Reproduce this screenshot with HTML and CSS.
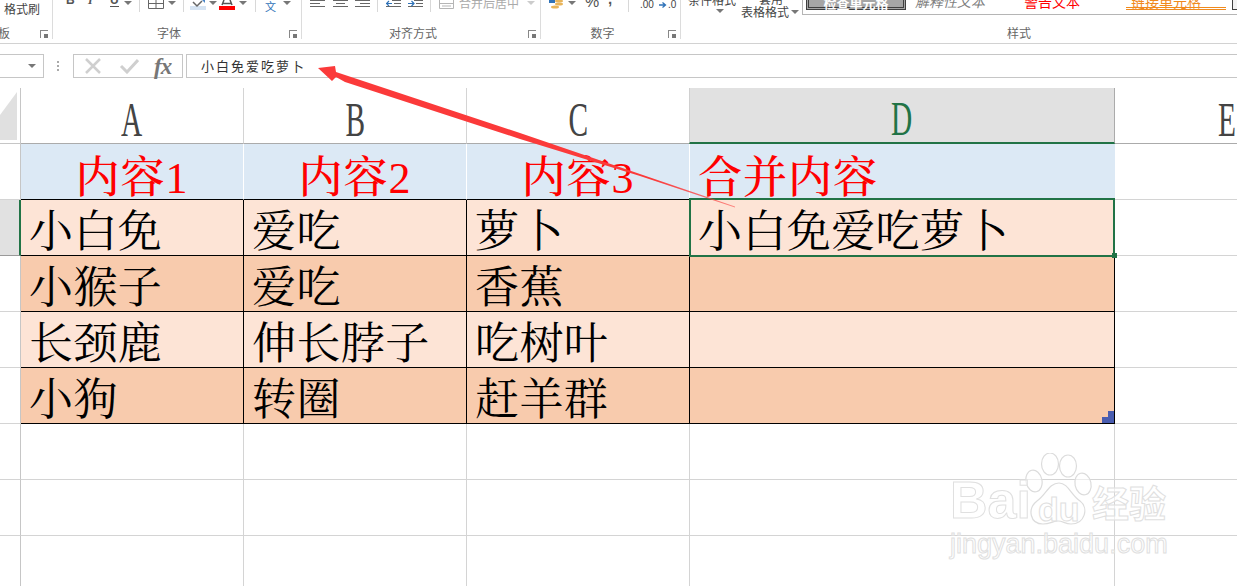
FILE: index.html
```html
<!DOCTYPE html>
<html lang="zh-CN">
<head>
<meta charset="utf-8">
<title>Excel</title>
<link rel="stylesheet" href="styles.css">
</head>
<body>
<div class="app">
  <header class="ribbon">
    <section class="group g-clip">
      <div class="tools"><span class="t t-brush">格式刷</span></div>
      <div class="foot"><span class="label label-left">板</span><i class="launch"></i></div>
    </section>
    <section class="group g-font">
      <div class="tools">
        <span class="t t-b">B</span><span class="t t-i">I</span><span class="t t-u">U</span>
        <i class="caret c-u"></i><i class="sep s-1"></i>
        <svg class="ic" width="20" height="30" viewBox="0 0 20 30"><path d="M2.500 0V8.500H17.500V0M10 0V8.500M2.500 3.500H17.500" fill="none" stroke="#666"/></svg>
        <i class="caret c-b"></i><i class="sep s-2"></i>
        <svg class="ic ic-fill" width="16" height="30" viewBox="0 0 16 30"><rect y="6" width="16" height="4" fill="#d5e3f2"/><path d="M3 2L7 6L12 1" fill="none" stroke="#666" stroke-width="1.500"/><path d="M12 0H15V3Z" fill="#4a86c8"/></svg>
        <i class="caret c-f"></i>
        <svg class="ic ic-a" width="16" height="30" viewBox="0 0 16 30"><path d="M3 5L5 0M13 5L11 0M4 3.500H12" fill="none" stroke="#555" stroke-width="1.500"/><rect y="6" width="16" height="4" fill="#f00"/></svg>
        <i class="caret c-a"></i><i class="sep s-3"></i>
        <span class="t t-wen">文</span>
        <i class="caret c-w"></i>
      </div>
      <div class="foot"><span class="label">字体</span><i class="launch"></i></div>
    </section>
    <section class="group g-align">
      <div class="tools">
        <svg class="ic ic-al1" width="16" height="30" viewBox="0 0 16 30"><path d="M0 .500H15M0 3.500H10M0 6.500H15" stroke="#666"/></svg>
        <svg class="ic ic-al2" width="15" height="30" viewBox="0 0 15 30"><path d="M0 .500H15M3 3.500H12M0 6.500H15" stroke="#666"/></svg>
        <svg class="ic ic-al2" width="15" height="30" viewBox="0 0 15 30"><path d="M0 .500H15M5 3.500H15M0 6.500H15" stroke="#666"/></svg>
        <i class="sep s-4"></i>
        <svg class="ic ic-in1" width="15" height="30" viewBox="0 0 15 30"><path d="M6 .500H15M8 3.500H15M0 6.500H15" stroke="#666"/><path d="M0 3.500H6M3 1L.500 3.500L3 6" fill="none" stroke="#2f72b8" stroke-width="1.200"/></svg>
        <svg class="ic ic-in2" width="15" height="30" viewBox="0 0 15 30"><path d="M6 .500H15M8 3.500H15M0 6.500H15" stroke="#666"/><path d="M0 3.500H6M3.500 1L6 3.500L3.500 6" fill="none" stroke="#2f72b8" stroke-width="1.200"/></svg>
        <i class="sep s-5"></i>
        <svg class="ic ic-mg" width="15" height="30" viewBox="0 0 15 30"><path d="M.500 0V8.500H14.500V0M.500 3.500H14.500M3 6H12" fill="none" stroke="#b5b5b5"/></svg>
        <span class="t t-merge">合并后居中</span>
        <i class="caret c-m"></i>
      </div>
      <div class="foot"><span class="label">对齐方式</span><i class="launch"></i></div>
    </section>
    <section class="group g-num">
      <div class="tools">
        <svg class="ic ic-cur" width="15" height="30" viewBox="0 0 15 30"><path d="M0 0H6V3H0Z" fill="#2f72b8"/><ellipse cx="10" cy="1" rx="4" ry="1.500" fill="#e8b45a"/><ellipse cx="10" cy="4" rx="4" ry="1.500" fill="#e8b45a"/><ellipse cx="6" cy="7" rx="4" ry="1.500" fill="#e8b45a"/></svg>
        <i class="caret c-n"></i>
        <span class="t t-pct">%</span>
        <span class="t t-comma">,</span>
        <i class="sep s-6"></i>
        <span class="t t-dec1">.00</span>
        <svg class="ic ic-arr" width="8" height="30" viewBox="0 0 8 30"><path d="M0 5H6M3.500 2.500L6.500 5L3.500 7.500" fill="none" stroke="#2f72b8" stroke-width="1.300"/></svg>
        <span class="t t-dec2">.0</span>
      </div>
      <div class="foot"><span class="label">数字</span><i class="launch"></i></div>
    </section>
    <section class="group g-style">
      <div class="tools">
        <div class="stack s-cond"><span class="st">条件格式</span><i class="caret c-low"></i></div>
        <div class="stack s-tbl"><span class="st st-c">套用</span><span class="st st-row">表格格式<i class="caret c-in"></i></span></div>
        <div class="gallery">
          <span class="sty sty-check">检查单元格</span>
          <span class="sty sty-exp">解释性文本</span>
          <span class="sty sty-warn">警告文本</span>
          <span class="sty sty-link">链接单元格</span>
          <span class="sty sty-out"></span>
        </div>
      </div>
      <div class="foot"><span class="label">样式</span></div>
    </section>
  </header>

  <div class="formula">
    <div class="namebox"><i class="caret c-name"></i></div>
    <div class="dots"><i></i><i></i><i></i></div>
    <div class="fxbox">
      <svg class="fx-x" width="18" height="16" viewBox="0 0 18 16"><path d="M2 1L16 15M16 1L2 15" stroke="#cfcfcf" stroke-width="2.500"/></svg>
      <svg class="fx-c" width="20" height="16" viewBox="0 0 20 16"><path d="M2 8L8 14L19 2" fill="none" stroke="#cfcfcf" stroke-width="3"/></svg>
      <span class="fx-t">fx</span>
    </div>
    <div class="input">小白免爱吃萝卜</div>
  </div>

  <main class="sheet">
    <div class="grid">
      <div class="corner"><i class="tri"></i></div>
      <div class="ch"><span>A</span></div><div class="ch"><span>B</span></div><div class="ch"><span>C</span></div><div class="ch ch-on"><span>D</span></div><div class="ch ch-e"><span>E</span></div>

      <div class="rh"></div>
      <div class="c hd">内容<b>1</b></div><div class="c hd">内容<b>2</b></div><div class="c hd">内容<b>3</b></div><div class="c hd hd-last">合并内容</div><div class="e"></div>

      <div class="rh rh-on"></div>
      <div class="c lt">小白免</div><div class="c lt">爱吃</div><div class="c lt">萝卜</div><div class="c lt sel">小白免爱吃萝卜</div><div class="e"></div>

      <div class="rh"></div>
      <div class="c dk">小猴子</div><div class="c dk">爱吃</div><div class="c dk">香蕉</div><div class="c dk"></div><div class="e"></div>

      <div class="rh"></div>
      <div class="c lt">长颈鹿</div><div class="c lt">伸长脖子</div><div class="c lt">吃树叶</div><div class="c lt"></div><div class="e"></div>

      <div class="rh"></div>
      <div class="c dk">小狗</div><div class="c dk">转圈</div><div class="c dk">赶羊群</div><div class="c dk resize"></div><div class="e"></div>

      <div class="rh"></div><div class="b"></div><div class="b"></div><div class="b"></div><div class="b"></div><div class="e"></div>
      <div class="rh"></div><div class="b"></div><div class="b"></div><div class="b"></div><div class="b"></div><div class="e"></div>
      <div class="rh"></div><div class="b"></div><div class="b"></div><div class="b"></div><div class="b"></div><div class="e"></div>
    </div>
  </main>

  <svg class="arrow" width="1237" height="586" viewBox="0 0 1237 586">
    <defs><linearGradient id="tail" gradientUnits="userSpaceOnUse" x1="318" y1="68" x2="735" y2="207"><stop offset=".8" stop-color="#fb3a3a"/><stop offset="1" stop-color="#fb3a3a" stop-opacity=".55"/></linearGradient></defs>
    <path d="M318 68L335 66L336 72L520 133L735 206.500L735 207.500L640 176L520 139L345 82L336 77L332 81Z" fill="url(#tail)"/>
  </svg>

  <div class="mark">
    <svg class="paw" width="68" height="74" viewBox="0 0 68 74">
      <g fill="rgba(255,255,255,.55)" stroke="#dcdcdc" stroke-width="1.200">
        <ellipse cx="9" cy="28" rx="8" ry="11" transform="rotate(-12 9 28)"/>
        <ellipse cx="25" cy="11" rx="8.500" ry="11"/>
        <ellipse cx="43" cy="13" rx="8.500" ry="11"/>
        <ellipse cx="58" cy="31" rx="8" ry="11" transform="rotate(-12 58 31)"/>
        <path d="M34 30C43 30 46 42 55 48C64 55 60 71 46 71C40 71 38 68 33 68C28 68 25 71 18 71C5 71 2 56 12 48C21 42 24 30 34 30Z"/>
      </g>
    </svg>
    <span class="m-bai">Bai</span><span class="m-du">du</span><span class="m-cn">经验</span>
    <span class="m-url">jingyan.baidu.com</span>
  </div>
</div>
</body>
</html>
```
FILE: styles.css
```css
* { box-sizing: border-box; margin: 0; padding: 0; }
html, body { width: 1237px; height: 586px; overflow: hidden; background: #fff; }
body { font-family: "Noto Sans CJK SC", "Liberation Sans", sans-serif; color: #444; }
i { display: block; font-style: normal; }
.app { position: relative; width: 1237px; height: 586px; overflow: hidden; display: flex; flex-direction: column; }

/* ribbon */
.ribbon { display: flex; flex: none; height: 44px; border-bottom: 1px solid #d2d2d2; overflow: hidden; }
.group { flex: none; height: 39px; display: flex; flex-direction: column; border-right: 1px solid #dcdcdc; }
.g-clip { width: 53px; }
.g-font { width: 249px; }
.g-align { width: 239px; }
.g-num { width: 140px; }
.g-style { width: 676px; border-right: 0; }
.tools { height: 27px; flex: none; display: flex; align-items: flex-start; }
.foot { height: 12px; flex: none; display: flex; align-items: center; }
.label { flex: 1; text-align: center; font-size: 12px; line-height: 12px; color: #666; }
.label-left { text-align: left; margin-left: -2px; }
.launch { width: 16px; height: 10px; flex: none; position: relative; }
.launch::before { content: ""; position: absolute; left: 4px; top: 2px; width: 7px; height: 7px; border-left: 1px solid #888; border-top: 1px solid #888; }
.launch::after { content: ""; position: absolute; left: 8px; top: 6px; width: 4px; height: 4px; background: #777; }
.ic { flex: none; display: block; }
.t { flex: none; display: block; }
.caret { flex: none; width: 0; height: 0; border-left: 4px solid transparent; border-right: 4px solid transparent; border-top: 4px solid #777; margin-top: 1px; }
.sep { flex: none; width: 1px; height: 12px; background: #d8d8d8; }

.t-brush { margin: 2px 0 0 4px; font-size: 12px; line-height: 14px; color: #444; }
.t-b { margin: -6px 0 0 13px; font: bold 12px/12px "Liberation Sans", sans-serif; color: #555; width: 9px; }
.t-i { margin: -6px 0 0 13px; font: italic bold 12px/12px "Liberation Serif", serif; color: #555; width: 5px; }
.t-u { margin: -6px 0 0 17px; font: bold 12px/12px "Liberation Sans", sans-serif; color: #555; width: 9px; border-bottom: 1px solid #555; height: 13px; }
.c-u { margin-left: 5px; }
.s-1 { margin-left: 7px; }
.g-font .ic:first-of-type { margin-left: 6px; }
.c-b { margin-left: 2px; }
.s-2 { margin-left: 7px; }
.ic-fill { margin-left: 6px; }
.c-f { margin-left: 3px; }
.ic-a { margin-left: 2px; }
.c-a { margin-left: 4px; }
.s-3 { margin-left: 8px; }
.t-wen { margin: 1px 0 0 9px; width: 13px; font-size: 11px; line-height: 11px; color: #2f72b8; }
.c-w { margin-left: 5px; }

.ic-al1 { margin-left: 8px; }
.ic-al2 { margin-left: 7px; }
.s-4 { margin-left: 7px; }
.ic-in1 { margin-left: 8px; }
.ic-in2 { margin-left: 7px; }
.s-5 { margin-left: 7px; }
.ic-mg { margin-left: 8px; }
.t-merge { margin: -4px 0 0 5px; width: 60px; font-size: 12px; line-height: 14px; color: #aaa; }
.c-m { margin-left: 8px; border-top-color: #ccc; }

.ic-cur { margin-left: 8px; }
.c-n { margin-left: 4px; }
.t-pct { margin: -6px 0 0 9px; width: 13px; font: 16px/16px "Liberation Sans", sans-serif; color: #555; }
.t-comma { margin: -9px 0 0 10px; width: 5px; font: bold 15px/15px "Liberation Sans", sans-serif; color: #555; }
.s-6 { margin-left: 15px; }
.t-dec1 { margin: 0 0 0 11px; width: 11px; font: 10px/10px "Liberation Sans", sans-serif; color: #444; }
.ic-arr { margin-left: 8px; }
.t-dec2 { margin: 0 0 0 1px; width: 8px; font: 10px/10px "Liberation Sans", sans-serif; color: #444; }

.stack { flex: none; position: relative; }
.st { display: block; font-size: 12px; line-height: 14px; color: #444; white-space: nowrap; }
.s-cond { width: 53px; margin-left: 7px; margin-top: -7px; }
.s-cond .c-low { margin: 2px 0 0 28px; }
.s-tbl { width: 61px; margin-top: -7px; }
.st-c { padding-left: 18px; height: 12px; line-height: 12px; }
.st-row { display: flex; align-items: center; height: 14px; margin-top: 0; }
.c-in { margin: 0 0 0 2px; }
.gallery { flex: none; width: 436px; height: 15px; display: flex; align-items: flex-start; border-left: 1px solid #b5b5b5; border-bottom: 1px solid #b5b5b5; }
.sty { display: block; flex: none; height: 10px; white-space: nowrap; font-size: 13px; line-height: 8px; }
.sty-check { width: 100px; margin-left: 3px; background: #a5a5a5; color: #fff; font-weight: 700; border: 3px double #3f3f3f; border-top: 0; font-size: 13px; text-align: center; line-height: 6px; }
.sty-exp { width: 76px; margin-left: 9px; color: #7f7f7f; font-style: italic; font-size: 14px; line-height: 2px; }
.sty-warn { width: 60px; margin-left: 33px; color: #f00; font-size: 14px; line-height: 2px; }
.sty-link { width: 100px; margin-left: 42px; padding-left: 5px; color: #f08a1d; font-size: 14px; line-height: 2px; border-bottom: 3px double #f08a1d; }
.sty-out { width: 20px; margin-left: 6px; background: #f2f2f2; border: 1px solid #3f3f3f; border-top: 0; }

/* formula bar */
.formula { flex: none; height: 44px; padding-top: 10px; display: flex; align-items: flex-start; }
.namebox { flex: none; width: 44px; height: 24px; border: 1px solid #c6c6c6; border-left: 0; position: relative; }
.c-name { position: absolute; left: 28px; top: 9px; margin: 0; }
.dots { flex: none; width: 29px; height: 24px; display: flex; flex-direction: column; align-items: center; justify-content: center; gap: 2px; padding-right: 1px; }
.dots i { width: 2px; height: 2px; background: #aaa; }
.fxbox { flex: none; width: 110px; height: 24px; border: 1px solid #c6c6c6; display: flex; align-items: center; padding-left: 10px; }
.fx-c { margin-left: 17px; }
.fx-t { margin-left: 15px; font: italic bold 23px/21px "Liberation Serif", serif; color: #777; letter-spacing: -1px; }
.input { flex: none; width: 1060px; height: 24px; margin-left: 3px; border: 1px solid #c6c6c6; border-right: 0; padding-left: 14px; font-size: 13px; line-height: 21px; letter-spacing: 2px; color: #333; }

/* sheet */
.sheet { flex: 1; min-height: 0; overflow: hidden; }
.grid { display: grid; grid-template-columns: 21px 223px 223px 223px 425px 223px; grid-auto-rows: 56px; }
.corner { border-right: 1px solid #c6c6c6; border-bottom: 1px solid #c6c6c6; padding: 4px 0 0 0; }
.tri { width: 17px; height: 48px; background: #e0e0e0; clip-path: polygon(100% 0, 100% 100%, 0 100%, 0 48%); }
.ch { border-right: 1px solid #d4d4d4; border-bottom: 1px solid #ababab; display: flex; align-items: center; justify-content: center; font: 49px/49px "Liberation Serif", serif; color: #444; overflow: hidden; padding-top: 7px; }
.ch span { display: block; transform: scaleX(.6); }
.ch-on { background: #e1e1e1; color: #217346; border-bottom: 2px solid #217346; border-right-color: #ababab; border-left: 1px solid #d0d0d0; margin-left: -1px; }
.ch-e { border-right: 0; }
.rh { border-right: 1px solid #c6c6c6; border-bottom: 1px solid #d4d4d4; }
.rh-on { background: #e1e1e1; border-right: 2px solid #217346; border-bottom-color: #9a9a9a; }
.c { position: relative; padding: 1px 0 0 8px; font-size: 44px; line-height: 55px; letter-spacing: .4px; white-space: nowrap; color: #000; border-right: 1px solid #000; border-bottom: 1px solid #000; font-family: "Noto Serif CJK SC", "Noto Sans CJK SC", sans-serif; }
.hd { background: #dce9f5; color: #f00; border-right-color: #fff; padding: 3px 0 0 0; text-align: center; font-weight: 500; letter-spacing: 1px; }
.hd-last { border-right-color: #dce9f5; border-bottom-color: #217346; text-align: left; padding-left: 8px; }
.hd b { font-family: "Liberation Serif", serif; font-weight: 400; }
.lt { background: #fde4d6; }
.dk { background: #f8cbad; }
.b { border-right: 1px solid #d4d4d4; border-bottom: 1px solid #d4d4d4; }
.e { border-bottom: 1px solid #d4d4d4; }
.sel { z-index: 2; }
.sel::after { content: ""; position: absolute; left: -1px; top: -2px; right: -1px; bottom: -2px; border: 2px solid #217346; }
.sel::before { content: ""; position: absolute; right: -3px; bottom: -3px; width: 5px; height: 5px; background: #217346; z-index: 1; }
.resize::after { content: ""; position: absolute; right: 0; bottom: 0; width: 12px; height: 6px; background: #4a5db0; }
.resize::before { content: ""; position: absolute; right: 0; bottom: 0; width: 6px; height: 12px; background: #4a5db0; }

/* overlays */
.arrow { position: absolute; left: 0; top: 0; z-index: 3; pointer-events: none; }
.mark { position: absolute; left: 950px; top: 452px; width: 220px; height: 108px; z-index: 3; pointer-events: none; }
.paw { position: absolute; left: 75px; top: 1px; }
.m-bai, .m-du, .m-cn, .m-url { position: absolute; white-space: nowrap; color: rgba(255,255,255,.6); -webkit-text-stroke: 1px #e0e0e0; }
.m-bai { left: 0; top: 22px; font: bold 52px/52px "Liberation Sans", sans-serif; }
.m-du { left: 88px; top: 40px; font: bold 34px/34px "Liberation Sans", sans-serif; }
.m-cn { left: 142px; top: 30px; font: 700 37px/40px "Noto Sans CJK SC", sans-serif; }
.m-url { left: 0; top: 77px; font: 27px/30px "Liberation Sans", sans-serif; }
```
